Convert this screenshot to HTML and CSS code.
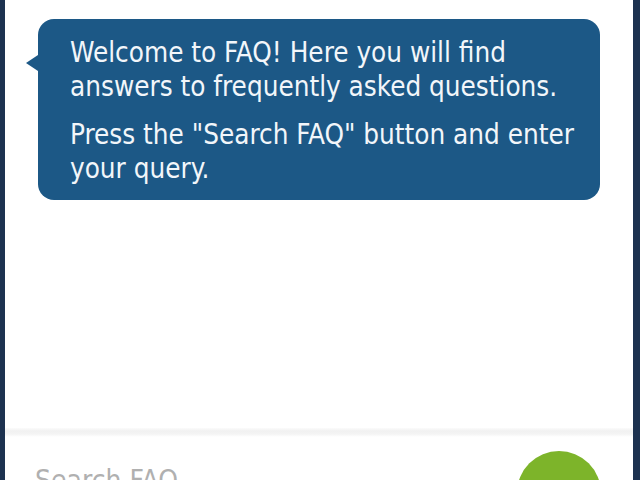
FILE: index.html
```html
<!DOCTYPE html>
<html lang="en">
<head>
  <meta charset="UTF-8">
  <title>FAQ</title>
  <link rel="stylesheet" href="styles.css">
</head>
<body>
  <div class="chat-panel">
    <div class="messages">
      <div class="bubble">
        <p>Welcome to FAQ! Here you will find answers to frequently asked questions.</p>
        <p>Press the "Search FAQ" button and enter your query.</p>
      </div>
    </div>
    <div class="composer">
      <div class="search-input">Search FAQ</div>
      <div class="send-btn"></div>
    </div>
  </div>
</body>
</html>
```

FILE: styles.css
```css
html, body {
  margin: 0;
  height: 100%;
}
body {
  background-color: #1d3250;
  font-family: "DejaVu Sans Condensed", "DejaVu Sans", sans-serif;
  overflow: hidden;
}
.chat-panel {
  margin: 0 7px 0 5px;
  height: 100%;
  background-color: white;
  display: flex;
  flex-direction: column;
}
.messages {
  flex: 1;
  padding: 19px 33px 0 33px;
}
.bubble {
  position: relative;
  background-color: #1c5886;
  color: #f2f6fa;
  border-radius: 16px;
  padding: 17px 18px 14px 32px;
  font-size: 27.6px;
  line-height: 34px;
}
.bubble::before {
  content: "";
  position: absolute;
  left: -12px;
  top: 36px;
  border-top: 8px solid transparent;
  border-bottom: 8px solid transparent;
  border-right: 12px solid #1c5886;
}
.bubble p {
  margin: 0;
}
.bubble p + p {
  margin-top: 14px;
}
.composer {
  height: 52px;
  background: linear-gradient(to bottom, #fbfbfb 0, #f1f1f1 3px, #f4f4f4 6px, #fff 9px);
  display: flex;
  align-items: flex-start;
  padding: 0 32px 0 30px;
  gap: 20px;
}
.search-input {
  flex: 1;
  color: #b0b0b0;
  font-size: 28px;
  padding-top: 36px;
}
.send-btn {
  width: 84px;
  height: 84px;
  border-radius: 50%;
  background-color: #7db42a;
  margin-top: 23px;
  flex-shrink: 0;
}
```
